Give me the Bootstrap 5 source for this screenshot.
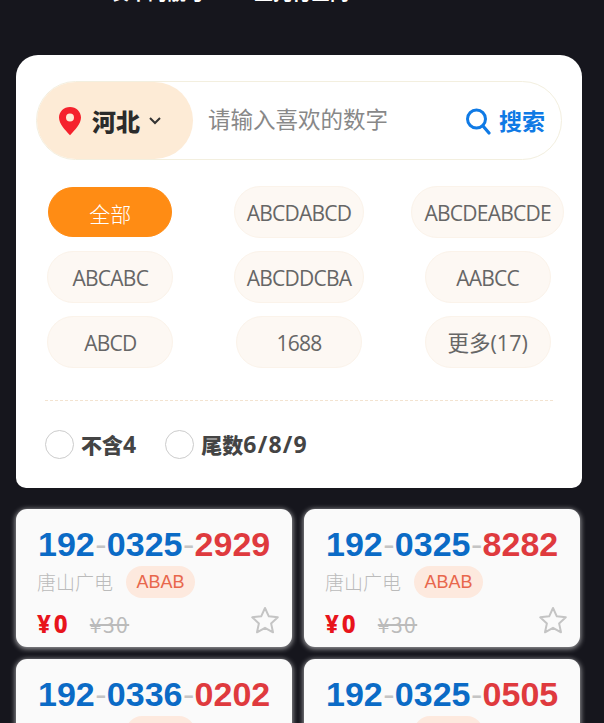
<!DOCTYPE html>
<html lang="zh">
<head>
<meta charset="utf-8">
<link href="https://cdn.jsdelivr.net/npm/bootstrap@5.3.0/dist/css/bootstrap.min.css" rel="stylesheet">
<style>
html,body{height:723px;overflow:hidden;background:#16161d;font-family:"Noto Sans CJK SC","Noto Sans",sans-serif}
.top-clip{height:55px;overflow:hidden;position:relative}
.top-text{color:#fff;font-weight:700;font-size:19px;line-height:30px;margin-top:-23px;padding-left:110px;white-space:nowrap}
.top-second{margin-left:30px}
.panel-box{margin:0 22px 0 16px;background:#fff;border-radius:22px 22px 10px 10px;height:433px;padding-top:26px}
.search-box{margin:0 20px;height:79px;border:1px solid #f3efdf;border-radius:40px;background:#fff}
.region-pill{width:156px;height:77px;background:#fdebd6;border-radius:39px;color:#2b2b2b;font-weight:900;font-size:24px;padding-left:21px;flex:none}
.pin-icon{margin-right:10px}
.search-hint{font-size:22.500px;color:#888;padding-left:15px;font-weight:400;margin-top:-3px}
.search-go{color:#0f7ae5;font-weight:700;font-size:23px;padding-right:16px;gap:8px}
.chip-grid{display:grid;grid-template-columns:repeat(3,1fr);justify-items:center;row-gap:13px;margin-top:26px;align-items:center}
.chip-item{min-width:126px;height:52px;padding:3px 12px 0;border-radius:26px;background:#fdf8f3;border:1px solid #fbf3ea;color:#666;font-family:"Open Sans","Noto Sans CJK SC",sans-serif;font-size:21px;letter-spacing:-.75px;display:flex;align-items:center;justify-content:center;white-space:nowrap}
.chip-on{background:#ff8c14;border-color:#ff8c14;color:#fff;height:50px;min-width:124px;letter-spacing:0}
.chip-cjk{font-family:"Noto Sans CJK SC",sans-serif;font-weight:300}
.chip-wide{letter-spacing:0;font-size:21.500px}
.rule-line{margin:32px 29px 0;border-top:1px dashed #f3e3d0}
.opt-row{margin:29px 29px 0;gap:28px;color:#444;font-weight:900;font-size:21px}
.opt-circle{width:29px;height:29px;border:1px solid #ccc;border-radius:50%;background:#fff;flex:none}
.opt-label{margin-left:-1px;line-height:29px}
.opt-num{font-family:"Noto Sans",sans-serif;font-weight:700;font-size:23px;letter-spacing:1.200px}
.card-grid{display:grid;grid-template-columns:276px 276px;column-gap:12px;row-gap:12px;margin:21px 0 0 16px}
.num-card{height:138px;border-radius:11px;background:#fafafa;box-shadow:0 1px 5px 1px rgba(255,255,255,.55);padding:13px 0 0 22px;position:relative}
.num-line{font-family:"Liberation Sans",sans-serif;font-weight:700;font-size:34px;line-height:44px;white-space:nowrap}
.n-blue{color:#0b6bc6}.n-red{color:#df3a3e}.n-dash{color:#c4c4c4;margin:0 .4px;font-weight:400}
.info-row{gap:13px}
.carrier{font-size:19px;color:#bbb;font-weight:300;margin-left:-1px;line-height:32px}
.tag-pill{height:32px;width:69px;border-radius:16px;background:#fde9de;color:#e8674c;font-family:"Liberation Sans",sans-serif;font-size:18px;display:flex;align-items:center;justify-content:center}
.price-row{margin-top:11px;margin-left:-1px;gap:19px}
.price-now{color:#e8141c;font-weight:800;font-size:24px;line-height:30px;font-family:"Noto Sans","Noto Sans CJK SC",sans-serif;letter-spacing:3px}
.price-old{color:#bbb;font-size:21px;text-decoration:line-through;line-height:30px;letter-spacing:1.500px}
.star-mark{position:absolute;right:12px;bottom:13px}
</style>
</head>
<body>
<div class="top-clip"><div class="top-text">表中的靓号<span class="top-second">一五托付全网</span></div></div>
<div class="panel-box">
  <div class="search-box d-flex align-items-center">
    <div class="region-pill d-flex align-items-center">
      <svg class="pin-icon" width="24" height="30" viewBox="0 0 24 30"><path fill="#f5222d" fill-rule="evenodd" d="M12 1C5.800 1 1 5.700 1 11.500c0 6.300 6 12.400 11 17.800 5-5.400 11-11.500 11-17.800C23 5.700 18.200 1 12 1zm0 6.500a4 4 0 1 1 0 8 4 4 0 0 1 0-8z"/></svg>
      <span>河北</span>
      <svg width="14" height="10" viewBox="0 0 14 10" class="ms-2"><path d="M2 2l5 5 5-5" fill="none" stroke="#333" stroke-width="2"/></svg>
    </div>
    <div class="search-hint flex-grow-1">请输入喜欢的数字</div>
    <div class="search-go d-flex align-items-center">
      <svg width="26" height="28" viewBox="0 0 26 28"><circle cx="11.500" cy="12" r="9" fill="none" stroke="#0f7ae5" stroke-width="3"/><path d="M18 19l6 7" stroke="#0f7ae5" stroke-width="3.200" stroke-linecap="round"/></svg>
      <span>搜索</span>
    </div>
  </div>
  <div class="chip-grid">
    <div class="chip-item chip-on chip-cjk">全部</div>
    <div class="chip-item">ABCDABCD</div>
    <div class="chip-item">ABCDEABCDE</div>
    <div class="chip-item">ABCABC</div>
    <div class="chip-item">ABCDDCBA</div>
    <div class="chip-item">AABCC</div>
    <div class="chip-item">ABCD</div>
    <div class="chip-item">1688</div>
    <div class="chip-item chip-wide">更多(17)</div>
  </div>
  <div class="rule-line"></div>
  <div class="opt-row d-flex align-items-center">
    <div class="d-flex align-items-center gap-2"><span class="opt-circle"></span><span class="opt-label">不含<span class="opt-num">4</span></span></div>
    <div class="d-flex align-items-center gap-2"><span class="opt-circle"></span><span class="opt-label">尾数<span class="opt-num">6/8/9</span></span></div>
  </div>
</div>
<div class="card-grid">
  <div class="num-card">
    <div class="num-line"><span class="n-blue">192</span><span class="n-dash">-</span><span class="n-blue">0325</span><span class="n-dash">-</span><span class="n-red">2929</span></div>
    <div class="info-row d-flex align-items-center"><span class="carrier">唐山广电</span><span class="tag-pill">ABAB</span></div>
    <div class="price-row d-flex align-items-center"><span class="price-now">¥0</span><span class="price-old">¥30</span></div>
    <svg class="star-mark" width="30" height="28" viewBox="0 0 30 28"><path d="M15 2l3.800 8.300 9 1-6.700 6.100 1.900 8.900L15 21.800l-8 4.500 1.900-8.900-6.700-6.100 9-1z" fill="none" stroke="#c4c4c4" stroke-width="2" stroke-linejoin="round"/></svg>
  </div>
  <div class="num-card">
    <div class="num-line"><span class="n-blue">192</span><span class="n-dash">-</span><span class="n-blue">0325</span><span class="n-dash">-</span><span class="n-red">8282</span></div>
    <div class="info-row d-flex align-items-center"><span class="carrier">唐山广电</span><span class="tag-pill">ABAB</span></div>
    <div class="price-row d-flex align-items-center"><span class="price-now">¥0</span><span class="price-old">¥30</span></div>
    <svg class="star-mark" width="30" height="28" viewBox="0 0 30 28"><path d="M15 2l3.800 8.300 9 1-6.700 6.100 1.900 8.900L15 21.800l-8 4.500 1.900-8.900-6.700-6.100 9-1z" fill="none" stroke="#c4c4c4" stroke-width="2" stroke-linejoin="round"/></svg>
  </div>
  <div class="num-card">
    <div class="num-line"><span class="n-blue">192</span><span class="n-dash">-</span><span class="n-blue">0336</span><span class="n-dash">-</span><span class="n-red">0202</span></div>
    <div class="info-row d-flex align-items-center"><span class="carrier">唐山广电</span><span class="tag-pill">ABAB</span></div>
  </div>
  <div class="num-card">
    <div class="num-line"><span class="n-blue">192</span><span class="n-dash">-</span><span class="n-blue">0325</span><span class="n-dash">-</span><span class="n-red">0505</span></div>
    <div class="info-row d-flex align-items-center"><span class="carrier">唐山广电</span><span class="tag-pill">ABAB</span></div>
  </div>
</div>
<script src="https://cdn.jsdelivr.net/npm/bootstrap@5.3.0/dist/js/bootstrap.bundle.min.js"></script>
</body>
</html>
